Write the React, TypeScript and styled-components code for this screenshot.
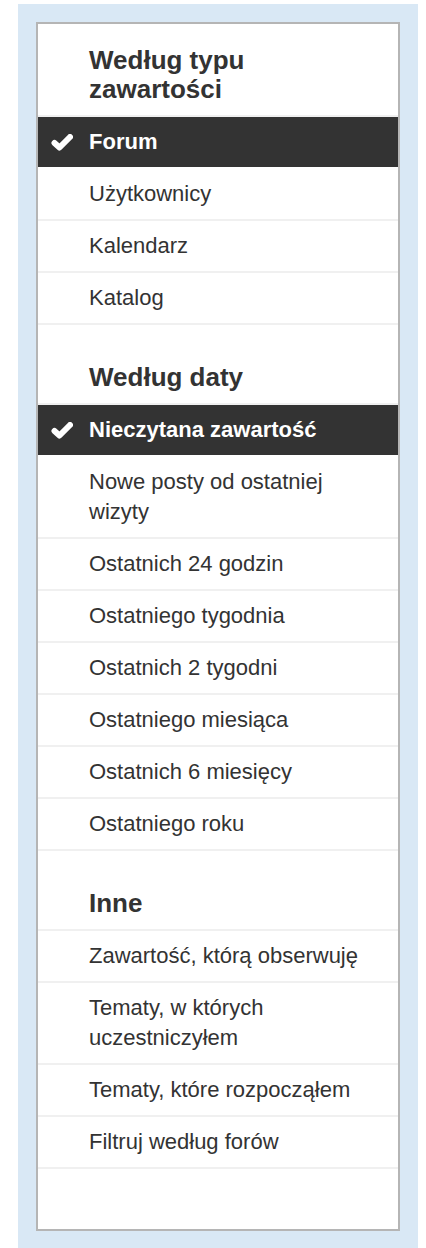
import React from "react";
import styled, { createGlobalStyle } from "styled-components";

const GlobalStyle = createGlobalStyle`
  html, body {
    margin: 0;
    padding: 0;
    background: #ffffff;
  }
  body {
    font-family: "Liberation Sans", Arial, Helvetica, sans-serif;
    color: #333333;
  }
  * { box-sizing: border-box; }
`;

const Page = styled.div`
  padding: 4px 0 0 18px;
`;

const Frame = styled.div`
  width: 400px;
  background: #d9e8f5;
  padding: 18px 18px 18px;
`;

const Panel = styled.nav`
  background: #ffffff;
  border: 2px solid #b5b5b5;
  padding-bottom: 60px;
`;

const Section = styled.section<{ $first?: boolean }>`
  margin-top: ${(p) => (p.$first ? "0" : "18px")};
`;

const Heading = styled.h3`
  margin: 0;
  padding: 22px 30px 11px 51px;
  font-size: 26px;
  line-height: 29px;
  font-weight: 700;
  color: #333333;
  border-bottom: 2px solid #f0f0f0;
`;

const List = styled.ul`
  list-style: none;
  margin: 0;
  padding: 0;
`;

const Item = styled.li<{ $active?: boolean }>`
  display: flex;
  align-items: center;
  padding: 10px 30px 10px 12px;
  font-size: 22px;
  line-height: 30px;
  font-weight: ${(p) => (p.$active ? 700 : 400)};
  color: ${(p) => (p.$active ? "#ffffff" : "#333333")};
  background: ${(p) => (p.$active ? "#333333" : "#ffffff")};
  box-shadow: ${(p) => (p.$active ? "0 2px 0 #ffffff" : "0 2px 0 #f0f0f0")};
  margin-bottom: 2px;
`;

const IconSlot = styled.span`
  flex: 0 0 39px;
  display: flex;
  align-items: center;
  height: 30px;
`;

const Label = styled.span`
  flex: 1 1 auto;
`;

const Check = () => (
  <svg
    width="24"
    height="20"
    viewBox="0 0 24 20"
    style={{ filter: "blur(0.5px)" }}
    aria-hidden
  >
    <polyline
      points="4.5,11 9.5,15.5 20,5"
      fill="none"
      stroke="#ffffff"
      strokeWidth="6"
      strokeLinecap="round"
      strokeLinejoin="round"
    />
  </svg>
);

type Entry = { label: string; active?: boolean };

const sections: { title: string; items: Entry[] }[] = [
  {
    title: "Według typu zawartości",
    items: [
      { label: "Forum", active: true },
      { label: "Użytkownicy" },
      { label: "Kalendarz" },
      { label: "Katalog" },
    ],
  },
  {
    title: "Według daty",
    items: [
      { label: "Nieczytana zawartość", active: true },
      { label: "Nowe posty od ostatniej wizyty" },
      { label: "Ostatnich 24 godzin" },
      { label: "Ostatniego tygodnia" },
      { label: "Ostatnich 2 tygodni" },
      { label: "Ostatniego miesiąca" },
      { label: "Ostatnich 6 miesięcy" },
      { label: "Ostatniego roku" },
    ],
  },
  {
    title: "Inne",
    items: [
      { label: "Zawartość, którą obserwuję" },
      { label: "Tematy, w których uczestniczyłem" },
      { label: "Tematy, które rozpocząłem" },
      { label: "Filtruj według forów" },
    ],
  },
];

export default function App() {
  return (
    <>
      <GlobalStyle />
      <Page>
        <Frame>
          <Panel>
            {sections.map((s, i) => (
              <Section key={s.title} $first={i === 0}>
                <Heading>{s.title}</Heading>
                <List>
                  {s.items.map((it) => (
                    <Item key={it.label} $active={it.active}>
                      <IconSlot>{it.active ? <Check /> : null}</IconSlot>
                      <Label>{it.label}</Label>
                    </Item>
                  ))}
                </List>
              </Section>
            ))}
          </Panel>
        </Frame>
      </Page>
    </>
  );
}
